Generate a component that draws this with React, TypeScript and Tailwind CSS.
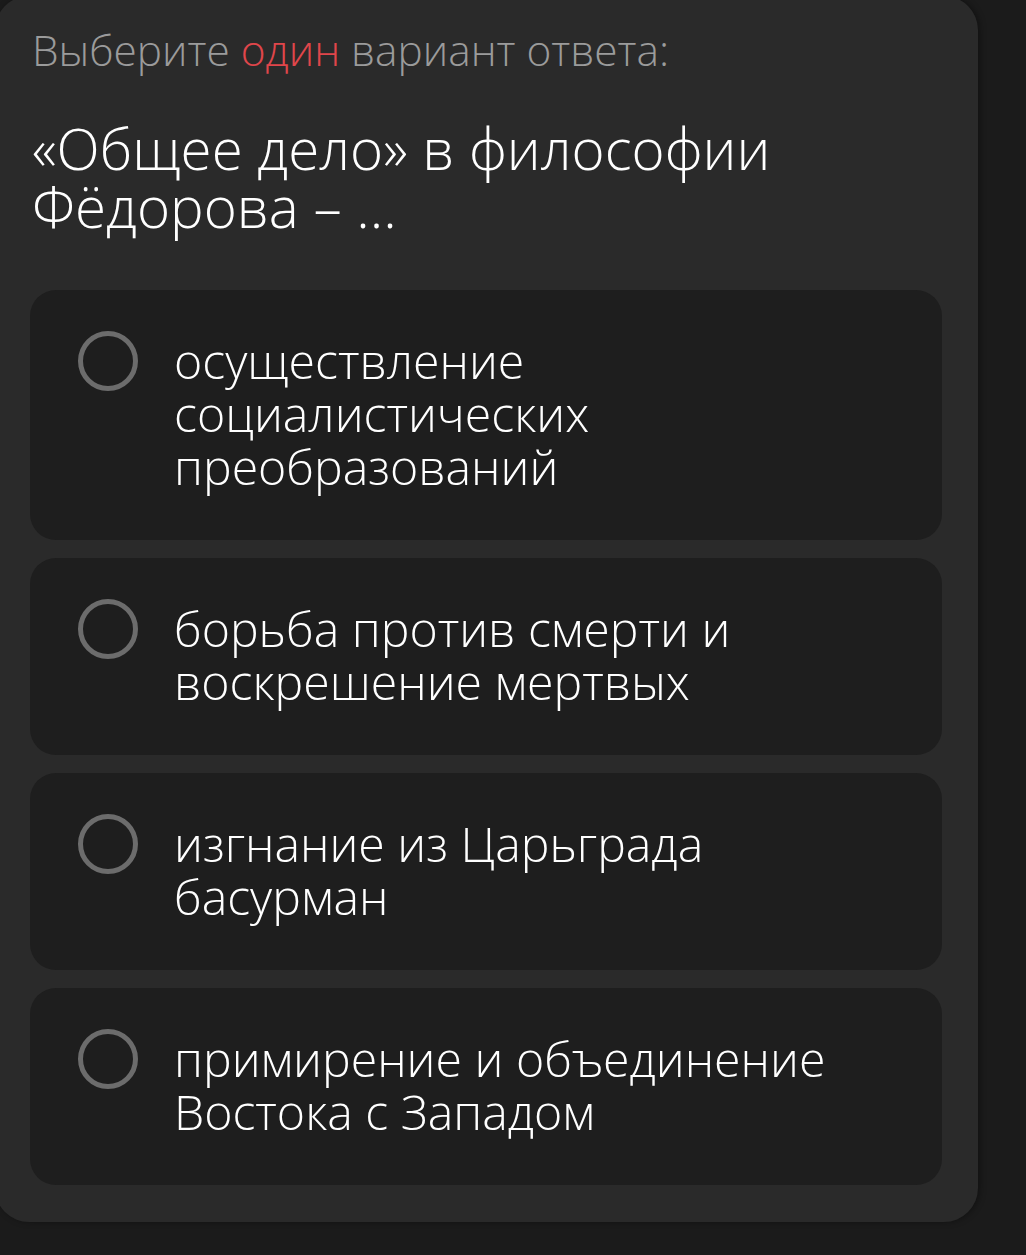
import React from 'react';

const options = [
  'осуществление социалистических преобразований',
  'борьба против смерти и воскрешение мертвых',
  'изгнание из Царьграда басурман',
  'примирение и объединение Востока с Западом',
];

const App: React.FC = () => {
  return (
    <div
      className="min-h-screen w-full overflow-hidden bg-[#1b1b1b]"
      style={{ fontFamily: '"Open Sans", "Noto Sans", sans-serif' }}
    >
      <div className="-ml-[5px] -mt-[4px] w-[983px] rounded-[34px] bg-[#2a2a2a] pb-[37px] pl-[35px] pr-[36px] pt-[28px] shadow-[2px_0_6px_rgba(0,0,0,0.35)]">
        {/* Prompt */}
        <div className="pl-[2px] text-[42.4px] font-light leading-[52px] text-[#9b9b9b]">
          Выберите <span className="text-[#e0464b]">один</span> вариант ответа:
        </div>

        {/* Question */}
        <div className="mt-[44px] pl-[2px] text-[56.5px] font-light leading-[58px] text-white">
          «Общее дело» в философии
          <br />
          Фёдорова – ...
        </div>

        {/* Answers */}
        <div className="mt-[54px] flex flex-col gap-[18px]">
          {options.map((text) => (
            <div
              key={text}
              className="flex items-start gap-[36px] rounded-[26px] bg-[#1e1e1e] pb-[47px] pl-[48px] pr-[30px] pt-[44px]"
            >
              <div className="mt-[-3px] h-[60px] w-[60px] shrink-0 rounded-full border-[5px] border-[#6c6c6c]" />
              <div className="max-w-[690px] text-[48.2px] font-light leading-[53px] text-white">
                {text}
              </div>
            </div>
          ))}
        </div>
      </div>
    </div>
  );
};

export default App;
